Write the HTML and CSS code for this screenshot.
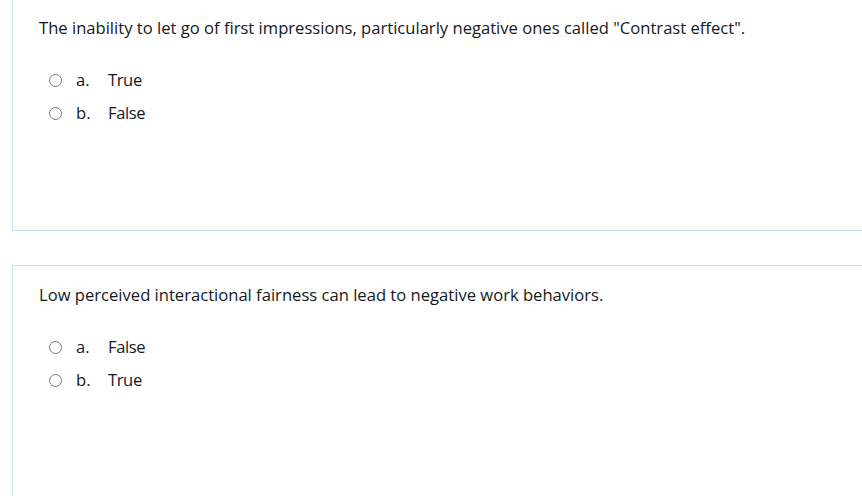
FILE: index.html
```html
<!DOCTYPE html>
<html>
<head>
<meta charset="utf-8">
<link rel="stylesheet" href="styles.css">
</head>
<body>
<div class="page">
  <div class="que">
    <div class="qtext">The inability to let go of first impressions, particularly negative ones called "Contrast effect".</div>
    <div class="answers">
      <div class="opt"><span class="radio"></span><span class="letter">a.</span><span class="label">True</span></div>
      <div class="opt"><span class="radio"></span><span class="letter">b.</span><span class="label">False</span></div>
    </div>
  </div>
  <div class="que">
    <div class="qtext">Low perceived interactional fairness can lead to negative work behaviors.</div>
    <div class="answers">
      <div class="opt"><span class="radio"></span><span class="letter">a.</span><span class="label">False</span></div>
      <div class="opt"><span class="radio"></span><span class="letter">b.</span><span class="label">True</span></div>
    </div>
  </div>
</div>
</body>
</html>
```

FILE: styles.css
```css
html, body {
  margin: 0;
  padding: 0;
  background: #fff;
  overflow: hidden;
}
body {
  font-family: "Open Sans", "Noto Sans", sans-serif;
  font-size: 16.6px;
  color: #16191c;
}
.page {
  padding-left: 12px;
  margin-top: -2px;
  display: flex;
  flex-direction: column;
  gap: 34px;
}
.que {
  width: 880px;
  border: 1px solid #c2e1f0;
  padding: 17px 0 105px 26px;
  box-sizing: border-box;
}
.qtext {
  line-height: 24px;
}
.answers {
  margin-top: 28px;
  padding-left: 10px;
  display: flex;
  flex-direction: column;
  gap: 9px;
}
.opt {
  display: flex;
  align-items: center;
  height: 24px;
  line-height: 24px;
}
.radio {
  width: 13px;
  height: 13px;
  box-sizing: border-box;
  border: 1.3px solid #7a7a7a;
  border-radius: 50%;
  margin-right: 14px;
  flex: none;
}
.letter {
  width: 32px;
  flex: none;
}
.label {
  letter-spacing: -0.4px;
}
```
